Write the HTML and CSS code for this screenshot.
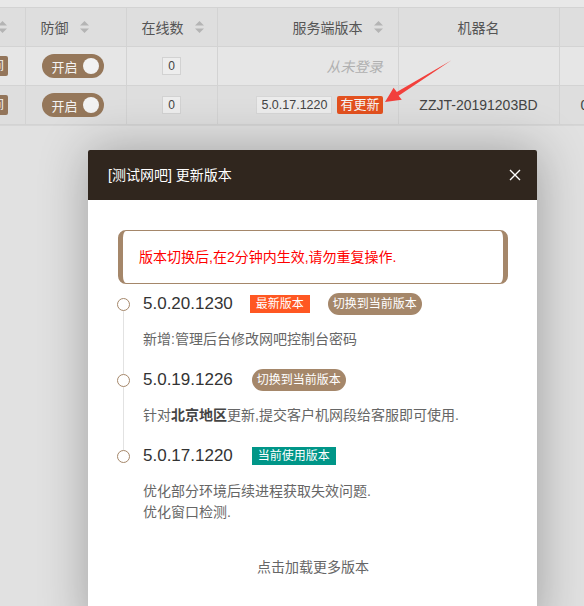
FILE: index.html
```html
<!DOCTYPE html>
<html lang="zh-CN">
<head>
<meta charset="utf-8">
<title>更新版本</title>
<link rel="stylesheet" href="styles.css">
</head>
<body>
<div class="page">
  <div class="table-wrap">
    <table class="grid">
      <colgroup>
        <col class="c0"><col class="c1"><col class="c2"><col class="c3"><col class="c4"><col class="c5">
      </colgroup>
      <thead>
        <tr>
          <th class="tight"><div class="clip"><span class="sort"><svg viewBox="0 0 9 14" width="9" height="14"><path d="M4.5 1 L9 5.5 H0 Z M0 8.5 H9 L4.5 13 Z" fill="#b4b4b4"/></svg></span></div></th>
          <th class="al-l"><span class="hd">防御</span><span class="sort"><svg viewBox="0 0 9 14" width="9" height="14"><path d="M4.5 1 L9 5.5 H0 Z M0 8.5 H9 L4.5 13 Z" fill="#b4b4b4"/></svg></span></th>
          <th class="al-c"><span class="hd">在线数</span><span class="sort"><svg viewBox="0 0 9 14" width="9" height="14"><path d="M4.5 1 L9 5.5 H0 Z M0 8.5 H9 L4.5 13 Z" fill="#b4b4b4"/></svg></span></th>
          <th class="al-r"><span class="hd">服务端版本</span><span class="sort"><svg viewBox="0 0 9 14" width="9" height="14"><path d="M4.5 1 L9 5.5 H0 Z M0 8.5 H9 L4.5 13 Z" fill="#b4b4b4"/></svg></span></th>
          <th class="al-c"><span class="hd">机器名</span></th>
          <th></th>
        </tr>
      </thead>
      <tbody>
        <tr class="row-a">
          <td class="tight"><div class="clip"><span class="btn-brown">时间</span></div></td>
          <td class="al-l"><span class="toggle">开启<span class="knob"></span></span></td>
          <td class="al-c"><span class="num">0</span></td>
          <td class="al-r"><span class="never">从未登录</span></td>
          <td class="al-c"></td>
          <td></td>
        </tr>
        <tr class="row-b">
          <td class="tight"><div class="clip"><span class="btn-brown">时间</span></div></td>
          <td class="al-l"><span class="toggle">开启<span class="knob"></span></span></td>
          <td class="al-c"><span class="num">0</span></td>
          <td class="al-r"><span class="ver-box">5.0.17.1220</span><span class="upd">有更新</span></td>
          <td class="al-c machine">ZZJT-20191203BD</td>
          <td class="last">0</td>
        </tr>
      </tbody>
    </table>
    <svg class="arrow" width="80" height="56" viewBox="380 52 80 56">
      <polygon points="385,102 393.6,87.8 396.8,91.9 451.5,60.2 398.6,95.8 401.8,99.8" fill="#f2403c"/>
    </svg>
  </div>

  <div class="modal">
    <div class="modal-head">
      <span class="modal-title">[测试网吧] 更新版本</span>
      <svg class="close" width="12" height="12" viewBox="0 0 12 12"><path d="M1 1 L11 11 M11 1 L1 11" stroke="#ffffff" stroke-width="1.4" fill="none"/></svg>
    </div>
    <div class="modal-body">
      <div class="alert">版本切换后,在2分钟内生效,请勿重复操作.</div>
      <ul class="timeline">
        <li class="tl-item">
          <span class="tl-dot"></span>
          <div class="tl-content">
            <div class="tl-title"><span class="ver">5.0.20.1230</span><span class="badge badge-new">最新版本</span><span class="pill">切换到当前版本</span></div>
            <p class="tl-desc">新增:管理后台修改网吧控制台密码</p>
          </div>
        </li>
        <li class="tl-item">
          <span class="tl-dot"></span>
          <div class="tl-content">
            <div class="tl-title"><span class="ver">5.0.19.1226</span><span class="pill">切换到当前版本</span></div>
            <p class="tl-desc">针对<b>北京地区</b>更新,提交客户机网段给客服即可使用.</p>
          </div>
        </li>
        <li class="tl-item">
          <span class="tl-dot"></span>
          <div class="tl-content">
            <div class="tl-title"><span class="ver">5.0.17.1220</span><span class="badge badge-cur">当前使用版本</span></div>
            <p class="tl-desc">优化部分环境后续进程获取失效问题.<br>优化窗口检测.</p>
          </div>
        </li>
      </ul>
      <div class="more">点击加载更多版本</div>
    </div>
  </div>
</div>
</body>
</html>
```
FILE: styles.css
```css
* { box-sizing: border-box; }
html, body { margin: 0; padding: 0; }
body {
  background: #e1e1e1;
  font-family: "Liberation Sans", "Noto Sans CJK SC", sans-serif;
  color: #555;
  width: 584px;
  height: 606px;
  overflow: hidden;
}
.page {
  position: relative;
  width: 584px;
  height: 606px;
  overflow: hidden;
}
.table-wrap {
  position: relative;
  padding-top: 7px;
  background: #e8e8e8;
  overflow: hidden;
  border-bottom: 1px solid #d6d6d6;
}
.grid {
  border-collapse: collapse;
  table-layout: fixed;
  width: 640px;
  font-size: 14px;
}
.c0 { width: 25px; }
.c1 { width: 101px; }
.c2 { width: 91px; }
.c3 { width: 181px; }
.c4 { width: 161px; }
.c5 { width: 81px; }
.grid th, .grid td {
  border: 1px solid #d3d3d3;
  height: 39px;
  padding: 0 15px;
  white-space: nowrap;
  overflow: hidden;
  font-weight: normal;
}
.grid thead th { background: #dedede; color: #555; border-top-color: #d3d3d3; }
.grid th:first-child, .grid td:first-child { border-left: none; }
.row-a td { background: #e6e6e6; }
.row-b td { background: #dedede; }
.al-l { text-align: left; }
.al-c { text-align: center; }
.al-r { text-align: right; }
.grid .tight { padding: 0; }
.clip {
  display: flex;
  justify-content: flex-end;
  align-items: center;
  overflow: hidden;
  width: 24px;
}
tbody .clip { padding-right: 16px; }
thead .clip { padding-right: 17px; }
.hd { vertical-align: middle; }
.sort { display: inline-block; vertical-align: middle; margin-left: 11px; line-height: 0; flex: none; }
.clip .sort { margin-left: 0; }
.btn-brown {
  display: inline-block;
  flex: none;
  background: #93755a;
  color: #f2f2f2;
  font-size: 12px;
  line-height: 20px;
  padding: 0 4px;
  border-radius: 2px;
}
.toggle {
  display: inline-flex;
  align-items: center;
  height: 24px;
  width: 62px;
  padding: 0 5px 0 10px;
  border-radius: 12px;
  background: #95775a;
  color: #f4f4f4;
  font-size: 13px;
  justify-content: space-between;
  margin-left: 1px;
}
.knob {
  width: 16px;
  height: 16px;
  border-radius: 50%;
  background: #f2f2f2;
}
.num {
  display: inline-block;
  width: 19px;
  height: 18px;
  line-height: 16px;
  font-size: 12px;
  background: #ededed;
  border: 1px solid #d2d2d2;
  color: #444;
  text-align: center;
}
.never {
  font-style: italic;
  color: #b0b0b0;
  font-size: 14px;
}
.ver-box {
  display: inline-block;
  height: 18px;
  line-height: 16px;
  padding: 0 4px;
  font-size: 12.5px;
  border: 1px solid #d6d6d6;
  background: #ececec;
  color: #444;
  vertical-align: middle;
}
.upd {
  display: inline-block;
  height: 18px;
  line-height: 18px;
  padding: 0 3px;
  margin-left: 5px;
  font-size: 13px;
  background: #e3511f;
  color: #f7f7f7;
  border-radius: 2px;
  vertical-align: middle;
}
.grid .row-b td.al-r { padding-right: 15px; }
.machine { color: #444; font-size: 14px; }
.grid td.last { padding-left: 21px; color: #444; }
.arrow {
  position: absolute;
  left: 380px;
  top: 52px;
}

/* modal */
.modal {
  position: absolute;
  left: 88px;
  top: 150px;
  width: 449px;
  height: 480px;
  background: #fff;
  border-radius: 2px 2px 0 0;
  box-shadow: 1px 1px 50px rgba(0,0,0,0.3);
}
.modal-head {
  height: 50px;
  background: #30261e;
  color: #fff;
  display: flex;
  align-items: center;
  justify-content: space-between;
  padding: 0 16px 0 20px;
  border-radius: 2px 2px 0 0;
}
.modal-title { font-size: 14px; line-height: 20px; }
.close { display: block; }
.modal-body { padding: 30px 29px 30px 30px; }
.alert {
  border: 1px solid #a5876a;
  border-left-width: 5px;
  border-right-width: 5px;
  border-radius: 8px;
  padding: 16px 16px;
  color: #ff0000;
  font-size: 14px;
  line-height: 20px;
}
.timeline {
  list-style: none;
  margin: 9px 0 0;
  padding: 0;
}
.tl-item {
  position: relative;
  display: grid;
  grid-template-columns: 25px 1fr;
  padding-bottom: 19px;
}
.tl-item::before {
  content: "";
  position: absolute;
  left: 5px;
  top: 17px;
  bottom: -5px;
  width: 1px;
  background: #e2e2e2;
}
.tl-item:last-child { padding-bottom: 0; }
.tl-item:last-child::before { display: none; }
.tl-dot {
  position: relative;
  width: 13px;
  height: 13px;
  margin: 4.5px 0 0 -1px;
  border: 1px solid #a5876a;
  border-radius: 50%;
  background: #fff;
}
.tl-title {
  display: flex;
  align-items: center;
  height: 22px;
}
.ver {
  font-size: 17px;
  color: #333;
  line-height: 22px;
}
.badge {
  display: inline-block;
  height: 18px;
  line-height: 18px;
  padding: 0 6px;
  font-size: 12px;
  color: #fff;
  margin-left: 17px;
}
.badge-new { background: #ff5722; }
.badge-cur { background: #009688; margin-left: 19px; }
.pill {
  display: inline-block;
  height: 22px;
  line-height: 22px;
  padding: 0 5px;
  border-radius: 11px;
  background: #a5876a;
  color: #fff;
  font-size: 12px;
  margin-left: 18px;
}
.badge + .pill { margin-left: 18px; }
.ver + .pill { margin-left: 19px; }
.tl-desc {
  margin: 14px 0 0;
  font-size: 14px;
  line-height: 21px;
  color: #666;
}
.tl-desc b { color: #444; }
.more {
  margin-top: 34px;
  text-align: center;
  font-size: 14px;
  line-height: 20px;
  color: #666;
}
```
